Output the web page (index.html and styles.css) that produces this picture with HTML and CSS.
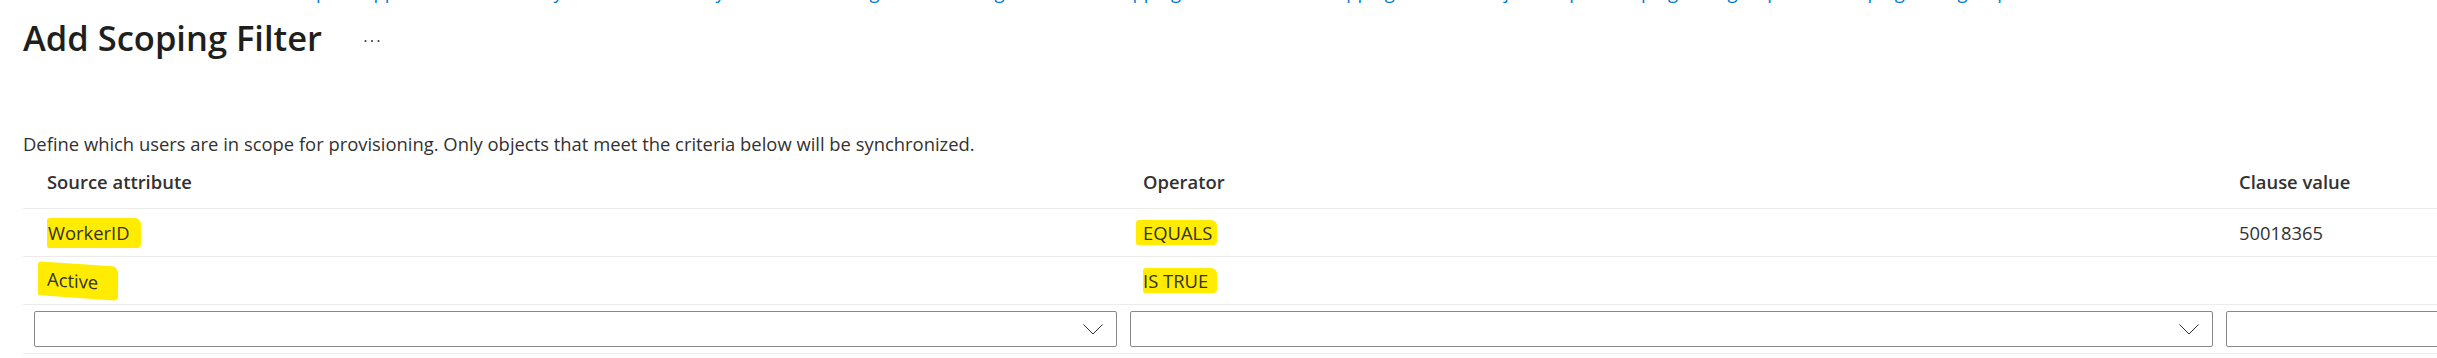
FILE: index.html
```html
<!DOCTYPE html>
<html lang="en">
    <head>
        <meta charset="utf-8" />
        <meta name="viewport" content="width=device-width, initial-scale=1" />
        <title>Add Scoping Filter</title>
        <link rel="stylesheet" href="styles.css">
    </head>
    <body>
        <nav class="breadcrumb">
            <a href="#">Home</a> &gt; <a href="#">Microsoft Entra ID</a> &gt; <a href="#">Enterprise applications</a> &gt;
            <a href="#">Workday to Active Directory User Provisioning</a> &gt; <a href="#">Provisioning</a> &gt;
            <a href="#">Attribute Mapping</a> &gt; <a href="#">Edit Attribute Mapping</a> &gt;
            <a href="#">Source Object Scope</a> &gt; <a href="#">Scoping filter group</a> &gt; <a href="#">Add Scoping Filter group</a>
        </nav>

        <header class="blade-header">
            <h1>Add Scoping Filter</h1>
            <button class="more" type="button" title="More">
                <svg width="16" height="4" viewBox="0 0 16 4">
                    <circle cx="1.5" cy="2" r="1" />
                    <circle cx="8" cy="2" r="1" />
                    <circle cx="14.5" cy="2" r="1" />
                </svg>
            </button>
        </header>

        <p class="intro">Define which users are in scope for provisioning. Only objects that meet the criteria below will be synchronized.</p>

        <table class="clauses">
            <colgroup>
                <col class="col" />
                <col class="col" />
                <col class="col" />
            </colgroup>
            <thead>
                <tr>
                    <th>Source attribute</th>
                    <th>Operator</th>
                    <th>Clause value</th>
                </tr>
            </thead>
            <tbody>
                <tr>
                    <td><span class="marker marker-worker">WorkerID</span></td>
                    <td><span class="marker marker-equals">EQUALS</span></td>
                    <td>50018365</td>
                </tr>
                <tr>
                    <td><span class="marker marker-active">Active</span></td>
                    <td><span class="marker marker-true">IS TRUE</span></td>
                    <td></td>
                </tr>
                <tr class="new-clause">
                    <td>
                        <div class="dropdown">
                            <svg width="20" height="11" viewBox="0 0 20 11"><polyline points="0.5,0.5 10,10 19.5,0.5" /></svg>
                        </div>
                    </td>
                    <td>
                        <div class="dropdown">
                            <svg width="20" height="11" viewBox="0 0 20 11"><polyline points="0.5,0.5 10,10 19.5,0.5" /></svg>
                        </div>
                    </td>
                    <td>
                        <div class="textbox"></div>
                    </td>
                </tr>
            </tbody>
        </table>
    </body>
</html>
```

FILE: styles.css
```css
body {
    margin: 0;
    overflow: hidden;
    background-color: #ffffff;
    color: #323130;
    font: normal 18.4px "Open Sans", Arial, sans-serif;
}
.breadcrumb {
    margin: -20px 0 0 23px;
    height: 24px;
    line-height: 24px;
    white-space: nowrap;
    color: #605e5c;
}
.breadcrumb a {
    color: #0078d4;
    text-decoration: none;
}
.blade-header {
    display: flex;
    align-items: center;
    margin: 10px 0 0 23px;
}
h1 {
    margin: 0;
    color: #201f1e;
    font-size: 34.5px;
    font-weight: 600;
    line-height: 48px;
}
.more {
    margin: 6px 0 0 42px;
    padding: 0;
    border: 0;
    background: none;
    line-height: 0;
}
.more svg {
    fill: #323130;
}
.intro {
    margin: 68px 0 0 23px;
    line-height: 27px;
}
.clauses {
    margin: 4px 0 0 23px;
    width: 3288px;
    table-layout: fixed;
    border-collapse: collapse;
}
.clauses .col {
    width: 1096px;
}
.clauses th,
.clauses td {
    height: 47px;
    padding: 0 0 0 24px;
    border-bottom: 1px solid #edebe9;
    text-align: left;
    vertical-align: middle;
    white-space: nowrap;
}
.clauses th {
    padding-bottom: 6px;
    height: 41px;
    font-weight: 600;
}
.marker {
    display: inline-block;
    background-color: #ffec00;
    border-radius: 3px 6px 4px 2px;
}
.marker-worker {
    padding: 2px 11px 3px 1px;
}
.marker-active {
    padding: 4px 20px 5px 9px;
    margin-left: -9px;
    transform: skewY(4deg);
}
.marker-equals {
    padding: 0 5px 0 7px;
    margin-left: -7px;
}
.marker-true {
    padding: 0 9px 0 0;
}
.new-clause td {
    padding: 6px 2px 6px 11px;
    height: 36px;
}
.dropdown,
.textbox {
    box-sizing: border-box;
    height: 36px;
    border: 1px solid #8a8886;
    border-radius: 2px;
}
.dropdown {
    display: flex;
    align-items: center;
    justify-content: flex-end;
    padding-right: 13px;
}
.dropdown svg {
    fill: none;
    stroke: #323130;
    stroke-width: 1;
}
```
